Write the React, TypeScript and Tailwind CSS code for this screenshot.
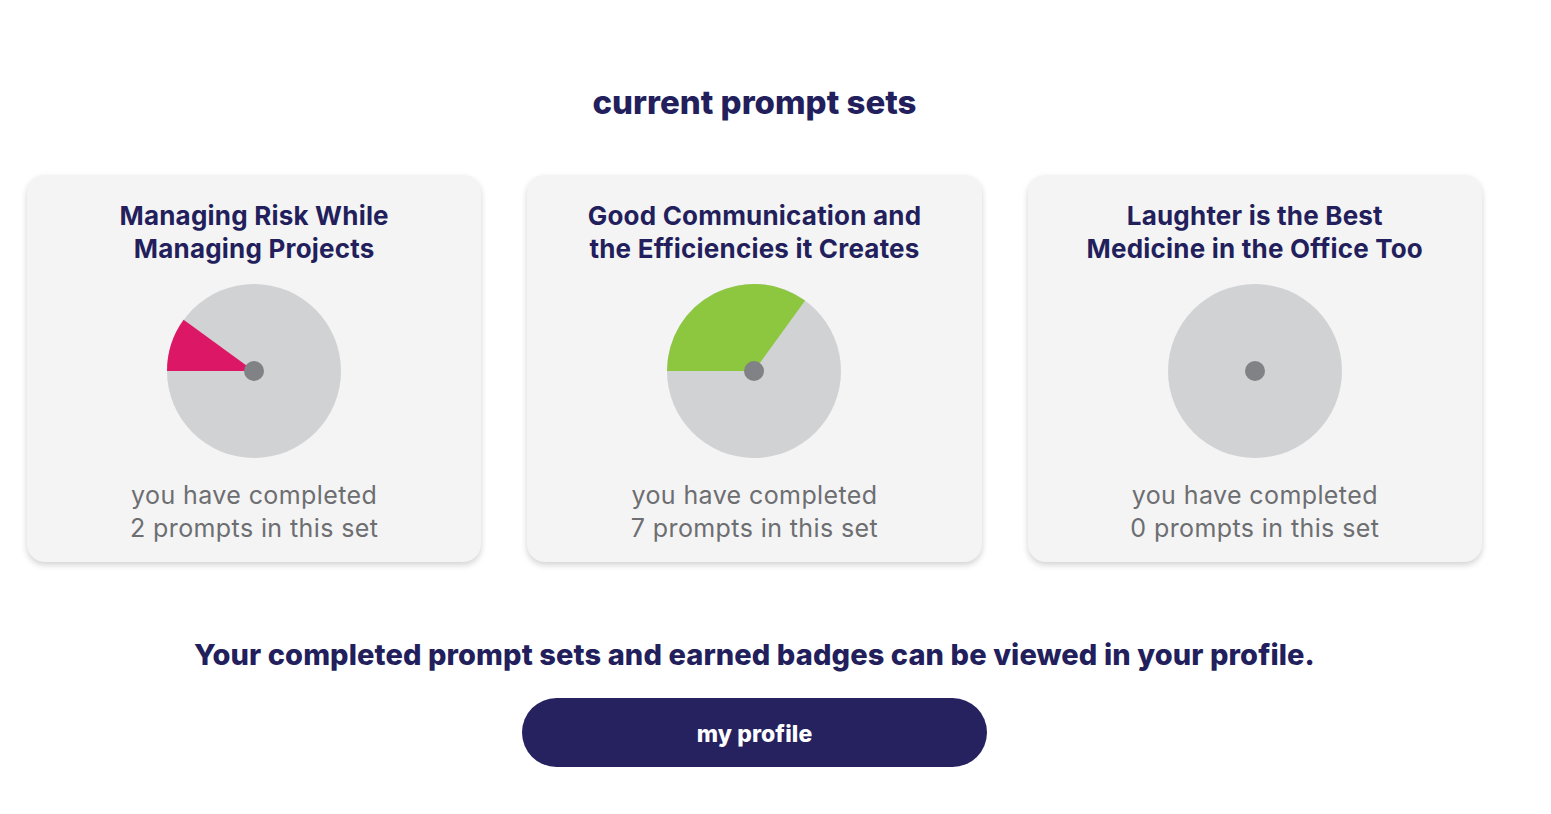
import React from 'react';

type PromptSet = {
    title: string[];
    done: number;
    color: string;
};

const TOTAL = 20;

const sets: PromptSet[] = [
    { title: ['Managing Risk While', 'Managing Projects'], done: 2, color: '#dc1866' },
    { title: ['Good Communication and', 'the Efficiencies it Creates'], done: 7, color: '#8dc63f' },
    { title: ['Laughter is the Best', 'Medicine in the Office Too'], done: 0, color: '#8dc63f' },
];

// pie that fills clockwise, starting at 9 o'clock
const ProgressPie: React.FC<{ done: number; color: string }> = ({ done, color }) => {
    const r = 87;
    const c = 88;
    const sweep = (done / TOTAL) * 360;
    const a = ((270 + sweep) * Math.PI) / 180;
    const ex = c + r * Math.sin(a);
    const ey = c - r * Math.cos(a);
    const large = sweep > 180 ? 1 : 0;

    return (
        <svg width="176" height="176" viewBox="0 0 176 176">
            <circle cx={c} cy={c} r={r} fill="#d1d2d4" />
            {done > 0 && (
                <path d={`M ${c} ${c} L ${c - r} ${c} A ${r} ${r} 0 ${large} 1 ${ex} ${ey} Z`} fill={color} />
            )}
            <circle cx={c} cy={c} r={10} fill="#808285" />
        </svg>
    );
};

const SetCard: React.FC<{ set: PromptSet }> = ({ set }) => (
    <div className="flex-1 h-[387px] bg-[#f4f4f4] rounded-[18px] shadow-[0_3px_6px_rgba(0,0,0,0.18)] flex flex-col items-center pt-[24px]">
        <h3 className="text-[26px] leading-[33px] font-bold text-[#231f5c] text-center tracking-[0.2px]">
            {set.title[0]}
            <br />
            {set.title[1]}
        </h3>
        <div className="mt-[18px]">
            <ProgressPie done={set.done} color={set.color} />
        </div>
        <p className="mt-[20px] text-[25px] leading-[33px] text-[#6d6e71] text-center tracking-[0.4px]">
            you have completed
            <br />
            {set.done} prompts in this set
        </p>
    </div>
);

export default function App() {
    return (
        <div className="w-[1509px] bg-white min-h-[814px] px-[27px] pt-[80px] flex flex-col items-center font-['Inter','Noto_Sans',sans-serif]">
            <h2 className="text-[33px] leading-[44px] font-extrabold text-[#231f5c]">current prompt sets</h2>

            <div className="w-full flex gap-[46px] mt-[51px]">
                {sets.map((s) => (
                    <SetCard key={s.title[0]} set={s} />
                ))}
            </div>

            <p className="mt-[73px] text-[29px] leading-[40px] font-extrabold text-[#231f5c] tracking-[0.1px]">
                Your completed prompt sets and earned badges can be viewed in your profile.
            </p>

            <button className="mt-[23px] w-[465px] h-[69px] pt-[3px] rounded-full bg-[#26215f] text-white text-[23px] font-extrabold tracking-[0.1px]">
                my profile
            </button>
        </div>
    );
}
